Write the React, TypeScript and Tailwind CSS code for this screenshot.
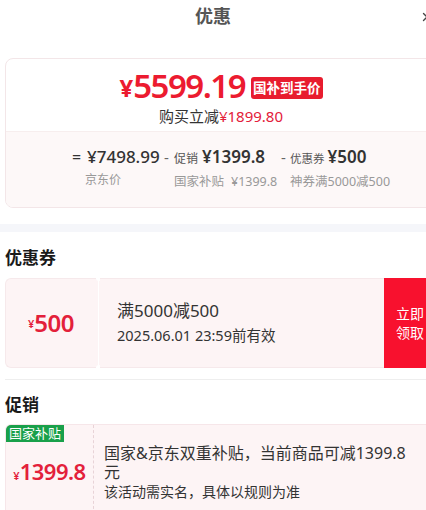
import { X } from "lucide-react";

function PriceBreakdown() {
  return (
    <div className="flex items-start pl-[66px] pt-[13px] text-[#333]">
      <span className="w-[15px] text-[16px] leading-[24px]">=</span>
      <div className="flex w-[71px] flex-col items-start">
        <span className="whitespace-nowrap text-[17px] font-medium leading-[24px]">¥7498.99</span>
        <span className="ml-[-2px] text-[12px] leading-[22px] text-[#999]">京东价</span>
      </div>
      <span className="ml-[6px] w-[10px] text-[15px] leading-[24px] text-[#666]">-</span>
      <div className="flex w-[107px] flex-col items-start">
        <div className="flex items-baseline gap-[4px] whitespace-nowrap">
          <span className="text-[12px] leading-[24px] text-[#555]">促销</span>
          <span className="text-[17px] font-semibold leading-[24px]">¥1399.8</span>
        </div>
        <div className="flex gap-[7px] whitespace-nowrap text-[12.5px] leading-[22px] text-[#999]">
          <span>国家补贴</span>
          <span>¥1399.8</span>
        </div>
      </div>
      <span className="w-[9px] text-[15px] leading-[24px] text-[#666]">-</span>
      <div className="flex flex-col items-start">
        <div className="flex items-baseline gap-[3px] whitespace-nowrap">
          <span className="text-[11.5px] leading-[24px] text-[#555]">优惠券</span>
          <span className="text-[17px] font-semibold leading-[24px]">¥500</span>
        </div>
        <span className="whitespace-nowrap text-[12.5px] leading-[22px] text-[#999]">神券满5000减500</span>
      </div>
    </div>
  );
}

function Coupon() {
  return (
    <div className="ml-[5px] flex h-[90px] w-[427px]">
      <div className="flex w-[91px] items-center justify-center rounded-l-[6px] border border-r-0 border-[#f6e9eb] bg-[#fdf4f5] text-[#e3203a]">
        <span className="mt-[2px] text-[11px] font-semibold">¥</span>
        <span className="text-[24px] font-semibold tracking-[-0.5px]">500</span>
      </div>
      <div className="flex w-[4px] flex-col justify-between bg-[#fdf4f5]">
        <span className="mx-auto -mt-[3px] h-[6px] w-[6px] rounded-full bg-white" />
        <span className="mx-auto h-full w-px bg-white" />
        <span className="mx-auto -mb-[3px] h-[6px] w-[6px] rounded-full bg-white" />
      </div>
      <div className="flex flex-1 flex-col justify-center border-y border-[#f6e9eb] bg-[#fdf4f5] pl-[17px] text-[#333]">
        <span className="text-[17px] leading-[24px]">满5000减500</span>
        <span className="text-[14.5px] leading-[24px]">2025.06.01 23:59前有效</span>
      </div>
      <div className="flex w-[48px] flex-col justify-center bg-[#f8112e] pl-[12px] text-[14px] leading-[19px] text-white">
        <span>立即</span>
        <span>领取</span>
      </div>
    </div>
  );
}

function Promo() {
  return (
    <div className="ml-[5px] flex h-[90px] w-[430px] rounded-tl-[6px] border-l border-t border-[#f6e6e9] bg-[#fdf4f5]">
      <div className="flex w-[87px] flex-col items-start">
        <span className="whitespace-nowrap rounded-tl-[5px] bg-[#19a04a] px-[3px] text-[13px] leading-[17px] text-white">
          国家补贴
        </span>
        <div className="mt-[13px] flex w-full items-baseline justify-center text-[#e3203a]">
          <span className="text-[11px] font-semibold">¥</span>
          <span className="text-[22px] font-semibold tracking-[-0.5px]">1399.8</span>
        </div>
      </div>
      <div className="border-l border-dashed border-[#e8d3d7]" />
      <div className="w-[316px] pl-[10px] pt-[19px] text-[#333]">
        <p className="text-[16px] leading-[19px]">国家&京东双重补贴，当前商品可减1399.8元</p>
        <p className="mt-[1px] text-[14px] leading-[18px]">该活动需实名，具体以规则为准</p>
      </div>
    </div>
  );
}

export default function App() {
  return (
    <div
      className="relative h-[510px] w-[426px] overflow-hidden bg-white"
      style={{ fontFamily: '"Noto Sans", "Noto Sans CJK SC", sans-serif' }}
    >
      <div className="relative flex h-[33px] items-center justify-center">
        <span className="text-[18px] font-bold text-[#555]">优惠</span>
        <X className="absolute right-[-8px] top-[10px] h-[14px] w-[14px] text-[#444]" strokeWidth={2.2} />
      </div>

      <div className="ml-[5px] mt-[25px] w-[432px] overflow-hidden rounded-[8px] border border-[#f3e6e8]">
        <div className="flex h-[72px] flex-col items-center pt-[8px]">
          <div className="flex items-center">
            <span className="mt-[4px] text-[24px] font-bold leading-[34px] text-[#ec1b30]">¥</span>
            <span className="text-[33px] font-semibold leading-[34px] tracking-[-1.5px] text-[#ec1b30]">5599.19</span>
            <span className="ml-[6px] mt-[4px] rounded-[3px] bg-[#e81c2e] px-[2px] text-[13.5px] font-bold leading-[22px] text-white">
              国补到手价
            </span>
          </div>
          <div className="mt-[1px] text-[15px] leading-[20px] text-[#333]">
            购买立减<span className="text-[#e3203a]">¥1899.80</span>
          </div>
        </div>
        <div className="h-[76px] border-t border-[#f7eeee] bg-[#fdf8f8]">
          <PriceBreakdown />
        </div>
      </div>

      <div className="mt-[16px] h-[8px] bg-[#f5f6fa]" />

      <div className="pl-[5px] pt-[14px] text-[17px] font-bold leading-[24px] text-[#1a1a1a]">优惠券</div>
      <div className="mt-[8px]">
        <Coupon />
      </div>

      <div className="ml-[5px] mt-[11px] h-px bg-[#eeeeee]" />

      <div className="pl-[5px] pt-[13px] text-[17px] font-bold leading-[24px] text-[#1a1a1a]">促销</div>
      <div className="mt-[7px]">
        <Promo />
      </div>
    </div>
  );
}
